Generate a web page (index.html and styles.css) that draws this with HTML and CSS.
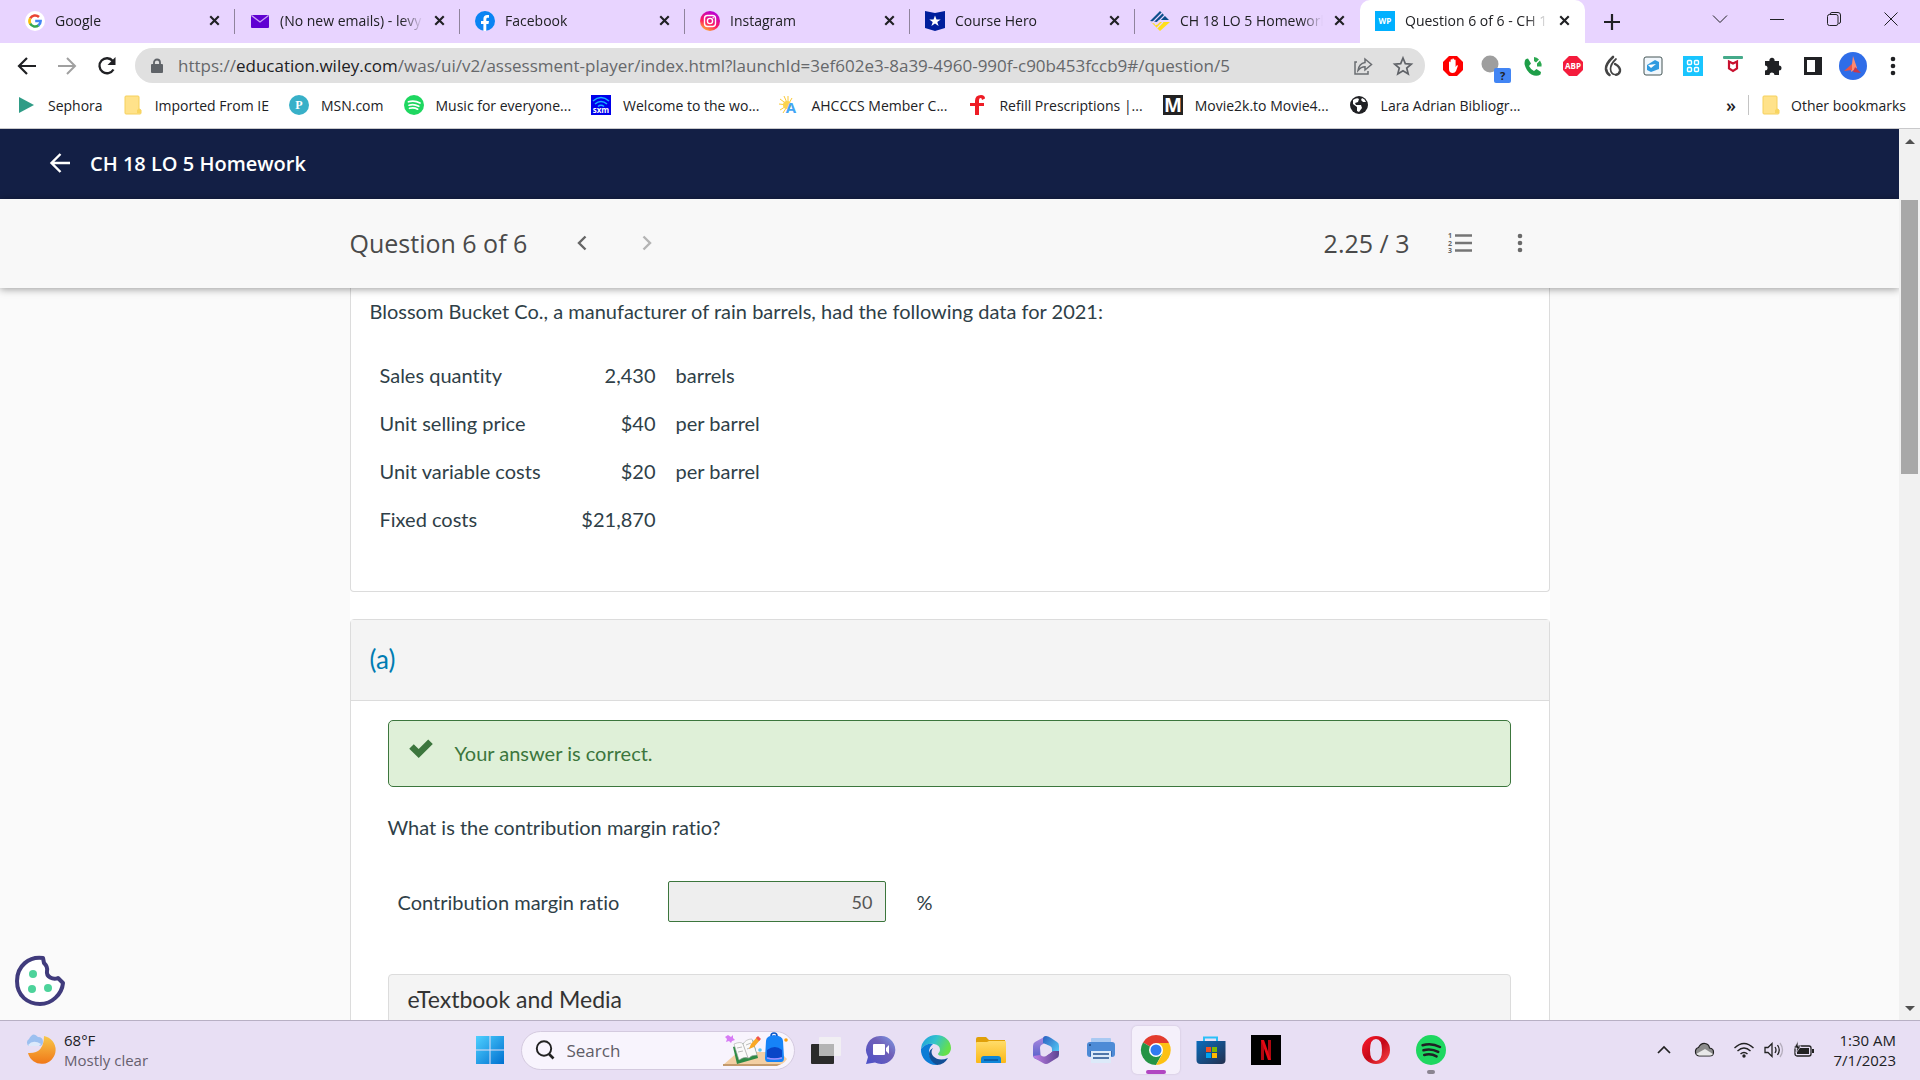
FILE: index.html
```
<!DOCTYPE html>
<html lang="en">
<head>
    <meta charset="utf-8">
    <meta name="viewport" content="width=device-width, initial-scale=1">
    <title>Question 6 of 6 - CH 18 LO 5 Homework</title>
    <link rel="stylesheet" href="styles.css">
</head>
<body>

    <!-- Shared icons -->
    <svg class="defs" aria-hidden="true">
        <defs>
            <linearGradient id="insta" x1="0.2" y1="1" x2="0.7" y2="0">
                <stop offset="0" stop-color="#ffc02e"/>
                <stop offset="0.4" stop-color="#ff1a5e"/>
                <stop offset="1" stop-color="#b400e0"/>
            </linearGradient>
            <linearGradient id="win" x1="0" y1="0" x2="1" y2="1">
                <stop offset="0" stop-color="#4fd0ff"/>
                <stop offset="1" stop-color="#0070d0"/>
            </linearGradient>
            <linearGradient id="moon" x1="0" y1="0" x2="0" y2="1">
                <stop offset="0" stop-color="#f8c84a"/>
                <stop offset="1" stop-color="#f07818"/>
            </linearGradient>
            <linearGradient id="chat" x1="0" y1="1" x2="1" y2="0">
                <stop offset="0" stop-color="#4a50c8"/>
                <stop offset="0.6" stop-color="#7060b8"/>
                <stop offset="1" stop-color="#7fa0e8"/>
            </linearGradient>
            <linearGradient id="edgeTop" x1="0" y1="0" x2="1" y2="0.4">
                <stop offset="0" stop-color="#1c9ae0"/>
                <stop offset="0.5" stop-color="#33c3cc"/>
                <stop offset="1" stop-color="#66e04a"/>
            </linearGradient>
            <linearGradient id="folder" x1="0" y1="0" x2="0" y2="1">
                <stop offset="0" stop-color="#ffdc6a"/>
                <stop offset="1" stop-color="#fbb816"/>
            </linearGradient>
            <linearGradient id="store" x1="0" y1="0" x2="1" y2="1">
                <stop offset="0" stop-color="#0a6cbc"/>
                <stop offset="1" stop-color="#24304e"/>
            </linearGradient>
            <linearGradient id="opera" x1="0" y1="0" x2="1" y2="1">
                <stop offset="0" stop-color="#ff1b2d"/>
                <stop offset="0.5" stop-color="#c40818"/>
                <stop offset="1" stop-color="#ff4a4a"/>
            </linearGradient>
            <linearGradient id="officeLeft" x1="0" y1="0" x2="0" y2="1">
                <stop offset="0" stop-color="#b08ae0"/>
                <stop offset="1" stop-color="#4a5cc8"/>
            </linearGradient>
            <linearGradient id="officeRight" x1="0" y1="0" x2="1" y2="1">
                <stop offset="0" stop-color="#2b5fc0"/>
                <stop offset="1" stop-color="#58d8fc"/>
            </linearGradient>
            <linearGradient id="officeBottom" x1="0" y1="0" x2="1" y2="0">
                <stop offset="0" stop-color="#c080e8"/>
                <stop offset="1" stop-color="#5c4490"/>
            </linearGradient>
        </defs>
        <symbol id="i-close" viewBox="0 0 16 16"><path d="M4 4l8 8M12 4l-8 8" stroke="#202124" stroke-width="2"/></symbol>
        <symbol id="i-folder" viewBox="0 0 20 20"><path d="M2 2q0-1 1-1h12q1 0 1 1v12l2 1v3q0 1-1 1H3q-1 0-1-1z" fill="#ffe28a" stroke="#f5d05c"/><path d="M14 18v-3l2-1.500 2 1.500v3z" fill="#f8d560"/></symbol>
        <symbol id="i-spotify" viewBox="0 0 20 20"><circle cx="10" cy="10" r="10" fill="#1ed760"/><path d="M4.400 6.800q6-1.800 11.600 1.200M5 10.200q5-1.500 9.800 1.100M5.500 13.300q4.400-1.200 8.200.9" fill="none" stroke="currentColor" stroke-width="1.700" stroke-linecap="round"/></symbol>
        <symbol id="i-dots" viewBox="0 0 20 20"><circle cx="10" cy="3" r="2.300"/><circle cx="10" cy="10" r="2.300"/><circle cx="10" cy="17" r="2.300"/></symbol>
    </svg>

    <!-- Tab strip -->
    <header class="tab-strip">
        <div class="tab">
            <svg class="favicon" viewBox="0 0 20 20"><circle cx="10" cy="10" r="10" fill="#fff"/><g fill="none" stroke-width="2.600"><path d="M5.200 7.400A5.600 5.600 0 0 1 14 6" stroke="#ea4335"/><path d="M5.300 12.900A5.600 5.600 0 0 1 5.200 7.300" stroke="#fbbc05"/><path d="M5.200 12.700A5.600 5.600 0 0 0 13.600 14.300" stroke="#34a853"/><path d="M10.200 10h5.400A5.600 5.600 0 0 1 13.400 14.400" stroke="#4285f4"/></g></svg>
            <span class="tab-title">Google</span>
            <button class="tab-close" aria-label="Close tab"><svg><use href="#i-close"/></svg></button>
        </div>
        <div class="tab">
            <svg class="favicon" viewBox="0 0 20 20"><rect x="1" y="4" width="18" height="13" rx="1" fill="#6001d2"/><path d="M1.500 4.500L10 11l8.500-6.500" fill="none" stroke="#c9a2f5" stroke-width="1.300"/></svg>
            <span class="tab-title">(No new emails) - levy</span>
            <button class="tab-close" aria-label="Close tab"><svg><use href="#i-close"/></svg></button>
        </div>
        <div class="tab">
            <svg class="favicon" viewBox="0 0 20 20"><circle cx="10" cy="10" r="10" fill="#0b84f3"/><path d="M8.400 20v-7H6v-3h2.400V8c0-2.600 1.500-4 3.800-4l1.800.1v2.600h-1.200c-1.200 0-1.500.7-1.500 1.500V10h2.700l-.5 3h-2.200v7z" fill="#fff"/></svg>
            <span class="tab-title">Facebook</span>
            <button class="tab-close" aria-label="Close tab"><svg><use href="#i-close"/></svg></button>
        </div>
        <div class="tab">
            <svg class="favicon" viewBox="0 0 20 20"><circle cx="10" cy="10" r="10" fill="url(#insta)"/><rect x="4.500" y="4.500" width="11" height="11" rx="3" fill="none" stroke="#fff" stroke-width="1.400"/><circle cx="10" cy="10" r="2.600" fill="none" stroke="#fff" stroke-width="1.400"/><circle cx="13.200" cy="6.800" r="0.800" fill="#fff"/></svg>
            <span class="tab-title">Instagram</span>
            <button class="tab-close" aria-label="Close tab"><svg><use href="#i-close"/></svg></button>
        </div>
        <div class="tab">
            <svg class="favicon" viewBox="0 0 20 20"><path d="M0 0l10 2L20 0v17l-10 3L0 17z" fill="#001e9c"/><path d="M10 4.500l1.500 4h4.200l-3.400 2.500 1.300 4-3.600-2.400L6.400 15l1.300-4-3.400-2.500h4.200z" fill="#fff"/></svg>
            <span class="tab-title">Course Hero</span>
            <button class="tab-close" aria-label="Close tab"><svg><use href="#i-close"/></svg></button>
        </div>
        <div class="tab no-line">
            <svg class="favicon" viewBox="0 0 20 20"><path d="M0 10L10 0l9 9H9l-2 2z" fill="#0d4f8b"/><path d="M1 11l9 9 10-9H10l-3 3z" fill="#ffdf1c"/><path d="M2 12L12 2M5 14L15 4M7 17l6-6" stroke="#e8d4ff" stroke-width="1.200"/></svg>
            <span class="tab-title">CH 18 LO 5 Homework</span>
            <button class="tab-close" aria-label="Close tab"><svg><use href="#i-close"/></svg></button>
        </div>
        <div class="tab active">
            <svg class="favicon" viewBox="0 0 20 20"><rect width="20" height="20" fill="#00b0ff"/><text x="10" y="13" class="wp">WP</text></svg>
            <span class="tab-title">Question 6 of 6 - CH 1</span>
            <button class="tab-close" aria-label="Close tab"><svg><use href="#i-close"/></svg></button>
        </div>
        <button class="new-tab" aria-label="New tab"><svg viewBox="0 0 16 16"><path d="M8 0v16M0 8h16" stroke="#202124" stroke-width="2.200"/></svg></button>
        <div class="window-buttons">
            <button aria-label="Search tabs"><svg viewBox="0 0 14 14"><path d="M0 3.500l7 7 7-7"/></svg></button>
            <button aria-label="Minimize"><svg viewBox="0 0 14 14"><path d="M0 7.500h14"/></svg></button>
            <button aria-label="Restore"><svg viewBox="0 0 14 14"><rect x="0.500" y="2.500" width="10.500" height="11" rx="2"/><path d="M3 2.500q0-2 2-2h6q2.500 0 2.500 2.500v7q0 1.500-2 1.500"/></svg></button>
            <button aria-label="Close"><svg viewBox="0 0 14 14"><path d="M0.500 0.500l13 13M13.500 0.500l-13 13"/></svg></button>
        </div>
    </header>

    <!-- Toolbar -->
    <div class="toolbar">
        <button class="tool" aria-label="Back"><svg viewBox="0 0 20 20"><path d="M19 10H3M10 2L2 10l8 8" fill="none" stroke="#202124" stroke-width="2.200"/></svg></button>
        <button class="tool" aria-label="Forward" disabled><svg viewBox="0 0 20 20"><path d="M1 10h16M10 2l8 8-8 8" fill="none" stroke="#a0a0a0" stroke-width="2"/></svg></button>
        <button class="tool" aria-label="Reload"><svg viewBox="0 0 20 20"><path d="M16.500 13.500A7.500 7.500 0 1 1 15.800 5" fill="none" stroke="#202124" stroke-width="2.300"/><path d="M18.500 1v8h-8z" fill="#202124"/></svg></button>
        <div class="address-bar">
            <svg class="lock" viewBox="0 0 12 16"><rect y="6" width="12" height="9" rx="1" fill="#5f6368"/><path d="M3 7V4.500a3 3 0 0 1 6 0V7" fill="none" stroke="#5f6368" stroke-width="1.800"/></svg>
            <a class="url" href="#">https://<b>education.wiley.com</b>/was/ui/v2/assessment-player/index.html?launchId=3ef602e3-8a39-4960-990f-c90b453fccb9#/question/5</a>
            <button class="tool" aria-label="Share"><svg viewBox="0 0 20 20" fill="none" stroke="#6a6d71" stroke-width="1.500"><path d="M4 6H2v12h13v-3"/><path d="M12 3l6.500 5.500L12 14v-3.200q-4 0-7 3.700 1-7 7-8z"/></svg></button>
            <button class="tool" aria-label="Bookmark"><svg viewBox="0 0 20 20"><path d="M10 2l2.300 5.600 6 .5-4.600 3.900 1.500 5.900-5.200-3.200-5.200 3.200L6.300 12 1.700 8.100l6-.5z" fill="none" stroke="#606368" stroke-width="1.700"/></svg></button>
        </div>
        <div class="extensions">
            <button class="tool" aria-label="AdBlock"><svg viewBox="0 0 20 20"><path d="M6 0h8l6 6v8l-6 6H6l-6-6V6z" fill="#f00"/><path d="M6 11V6.500q0-1 .8-1t.8 1V4.300q0-1 .8-1t.8 1V3.600q0-1 .9-1t.9 1v.8q0-1 .8-1t.8 1V11l1-1.600q.8-.6 1.400.2L13 15q-1 2-3.200 2Q6 17 6 13z" fill="#fff"/></svg></button>
            <button class="tool" aria-label="Site status"><svg viewBox="0 0 20 20"><circle cx="7" cy="8" r="8.500" fill="#9e9e9e"/></svg><span class="badge">?</span></button>
            <button class="tool" aria-label="Phone"><svg viewBox="0 0 20 20"><path d="M3 3l2-.5 3 5-2 2.500q2 4 5 5l2.500-2 4.500 3-.5 2.500q-4 2.500-9 0Q3 15 1.500 8q0-4 1.500-5z" fill="#1e9e48"/><path d="M11 1q3 0 5 2.500l-3 3L11 5zM17 4.500q2 3 1.500 6H14l0-3z" fill="#2aa850"/></svg></button>
            <button class="tool" aria-label="Adblock Plus"><svg viewBox="0 0 20 20"><path d="M6 0h8l6 6v8l-6 6H6l-6-6V6z" fill="#f41c3c"/><text x="10" y="13" class="abp">ABP</text></svg></button>
            <button class="tool" aria-label="Flame"><svg viewBox="0 0 20 20" fill="none" stroke="#444" stroke-linecap="round"><path d="M10 1Q2.500 8 3 13q.5 4 3.500 6" stroke-width="2.600"/><path d="M13 3Q7.500 8 7.500 13q.5 5 4 5.500" stroke-width="1.700"/><path d="M12 8q5.500 3 5 7-.8 3.500-4 3.800" stroke-width="2.400"/></svg></button>
            <button class="tool" aria-label="Print helper"><svg viewBox="0 0 20 20"><rect x="1" y="1" width="18" height="18" rx="2" fill="#f1f7fc" stroke="#455"/><path d="M4 9l8-5 4 2v7l-8 3-4-2z" fill="#2e9be0"/><path d="M5 9l8-1-5 4z" fill="#fff"/></svg></button>
            <button class="tool" aria-label="Apps"><svg viewBox="0 0 20 20"><rect width="20" height="20" fill="#19c5ff"/><g fill="none" stroke="#fff" stroke-width="1.400"><rect x="4.500" y="4.500" width="4" height="4" rx="1"/><rect x="11.500" y="4.500" width="4" height="4" rx="1"/><rect x="4.500" y="11.500" width="4" height="4" rx="1"/><rect x="11.500" y="11.500" width="4" height="4" rx="1"/></g></svg></button>
            <button class="tool" aria-label="McAfee"><svg viewBox="0 0 20 20"><rect y="0" width="20" height="3" rx="1" fill="#45aa8a"/><path d="M6 5.500v7l4 2.500 4-2.500v-7l-4 2z" fill="none" stroke="#c8102e" stroke-width="2.200"/></svg></button>
            <button class="tool" aria-label="Extensions"><svg viewBox="0 0 20 20"><path d="M2 5h4.500a2.600 2.600 0 1 1 5 0H16v4.500a2.500 2.500 0 1 1 0 5V19h-4.500a2.500 2.500 0 0 0-5 0H2v-4.500a2.500 2.500 0 0 0 0-5z" fill="#202124"/></svg></button>
            <button class="tool" aria-label="Side panel"><svg viewBox="0 0 20 20"><path d="M1 1h18v18H1zM4 4v12h8V4z" fill="#202124" fill-rule="evenodd"/></svg></button>
            <button class="tool avatar" aria-label="Profile"><svg viewBox="0 0 28 28"><circle cx="14" cy="14" r="14" fill="#2f6de8"/><path d="M14 4l4 12-6 4z" fill="#ff8a70"/><path d="M13 12l-8 7 8-1z" fill="#e8544a"/><path d="M16 15l6 6-8-1z" fill="#c8384a"/></svg></button>
            <button class="tool" aria-label="Menu"><svg fill="#202124"><use href="#i-dots"/></svg></button>
        </div>
    </div>

    <!-- Bookmarks -->
    <nav class="bookmarks">
        <a href="#"><svg viewBox="0 0 20 20"><path d="M3 2l15 8-15 8z" fill="#2f9c86"/></svg>Sephora</a>
        <a href="#"><svg><use href="#i-folder"/></svg>Imported From IE</a>
        <a href="#"><svg viewBox="0 0 20 20"><circle cx="10" cy="10" r="10" fill="#38b0c8"/><text x="10" y="14" class="pp">P</text></svg>MSN.com</a>
        <a href="#" class="on-white"><svg><use href="#i-spotify"/></svg>Music for everyone...</a>
        <a href="#"><svg viewBox="0 0 20 20"><rect width="20" height="20" fill="#0000eb"/><path d="M2 6q8-7 16 0M4 9q6-5 12 0M7 11.500q3-2.500 6 0" fill="none" stroke="#1ab0ff" stroke-width="1.600"/><text x="10" y="18" class="sxm">sxm</text></svg>Welcome to the wo...</a>
        <a href="#"><svg viewBox="0 0 20 20"><path d="M9 10L1 4M9 10L5 1M9 10l0-9M9 10L0 9M9 10l-8 5M9 10l-5 8M9 10l4-7" stroke="#fbc934"/><circle cx="8" cy="10" r="4" fill="#fbd34d"/><text x="12" y="18" class="ahc">A</text></svg>AHCCCS Member C...</a>
        <a href="#"><svg viewBox="0 0 20 20"><path d="M8 20v-9H3V8h5V6q0-6 6-6 4 0 4 3.500L15 5q0-2-1.500-2T12 6v2h5v3h-5v9z" fill="#ee1c25"/></svg>Refill Prescriptions |...</a>
        <a href="#"><svg viewBox="0 0 20 20"><rect width="20" height="20" fill="#222"/><text x="10" y="17" class="mov">M</text></svg>Movie2k.to Movie4...</a>
        <a href="#"><svg viewBox="0 0 20 20"><circle cx="10" cy="10" r="9" fill="#202124"/><path d="M4 5q4-3 6-1l-1 3-3 1 1 2 5 0 1 3-3 4-2-1 0-4-4-3zM13 3q3 1 4 4l-3 0-2-2z" fill="#fff"/></svg>Lara Adrian Bibliogr...</a>
        <button class="overflow" aria-label="More bookmarks">»</button>
        <a href="#" class="other"><svg><use href="#i-folder"/></svg>Other bookmarks</a>
    </nav>

    <!-- Page -->
    <div class="viewport">
        <div class="page">
            <div class="course-bar">
                <a href="#" aria-label="Back to course"><svg viewBox="0 0 20 20"><path d="M20 10H2M10.500 1L1.500 10l9 9" fill="none" stroke="#fff" stroke-width="2.400"/></svg></a>
                <h1>CH 18 LO 5 Homework</h1>
            </div>

            <div class="question-bar">
                <div class="question-inner">
                    <h2>Question 6 of 6</h2>
                    <button class="step" aria-label="Previous question"><svg viewBox="0 0 10 16"><path d="M8.500 1.500L2 8l6.500 6.500"/></svg></button>
                    <button class="step" aria-label="Next question" disabled><svg viewBox="0 0 10 16"><path d="M1.500 1.500L8 8l-6.500 6.500"/></svg></button>
                    <span class="score">2.25 / 3</span>
                    <button class="list-button" aria-label="Question list"><svg viewBox="0 0 24 20"><path d="M7 2.500h17M7 10h17M7 17.500h17" stroke="#757575" stroke-width="2.500"/><text x="0" y="5">1</text><text x="0" y="13">2</text><text x="0" y="20">3</text></svg></button>
                    <button class="more-button" aria-label="More options"><svg fill="#6a6a6a"><use href="#i-dots"/></svg></button>
                </div>
            </div>

            <main class="content">
                <section class="card card-intro">
                    <p>Blossom Bucket Co., a manufacturer of rain barrels, had the following data for 2021:</p>
                    <table class="data">
                        <tr><td>Sales quantity</td><td class="num">2,430</td><td>barrels</td></tr>
                        <tr><td>Unit selling price</td><td class="num">$40</td><td>per barrel</td></tr>
                        <tr><td>Unit variable costs</td><td class="num">$20</td><td>per barrel</td></tr>
                        <tr><td>Fixed costs</td><td class="num">$21,870</td><td></td></tr>
                    </table>
                </section>

                <section class="card">
                    <h3 class="part-title">(a)</h3>
                    <div class="part-body">
                        <div class="alert">
                            <svg viewBox="0 0 24 18"><path d="M2.500 7.500l7.200 7L21.500 2.800" fill="none" stroke="#3c763d" stroke-width="6.500"/></svg>
                            <span>Your answer is correct.</span>
                        </div>
                        <p>What is the contribution margin ratio?</p>
                        <div class="answer">
                            <label for="ratio">Contribution margin ratio</label>
                            <input type="text" id="ratio" value="50" disabled>
                            <span>%</span>
                        </div>
                        <div class="media">eTextbook and Media</div>
                    </div>
                </section>
            </main>

            <button class="cookie" aria-label="Cookie settings"><svg viewBox="0 0 50 50"><path d="M28 2C14 0 2 10 2 25s11 23 23 23 22-10 23-21l-5-5c-5 2-12-1-11-7 1-4-1-6-3-8z" fill="#fff" stroke="#403b7c" stroke-width="4" stroke-linejoin="round"/><g fill="#4dd39b"><circle cx="18" cy="18" r="4"/><circle cx="17" cy="33" r="4"/><circle cx="33" cy="32" r="4"/></g></svg></button>
        </div>
        <div class="scrollbar">
            <svg viewBox="0 0 10 6"><path d="M0 6l5-5 5 5z"/></svg>
            <div class="thumb"></div>
            <svg class="down" viewBox="0 0 10 6"><path d="M0 0l5 5 5-5z"/></svg>
        </div>
    </div>

    <!-- Taskbar -->
    <footer class="taskbar">
        <div class="weather">
            <svg viewBox="0 0 28 28"><path d="M19 2A14 14 0 1 1 3 19Q19 20 19 2z" fill="url(#moon)"/><path d="M4 12a4 4 0 0 1 0-7q4-8 9-2 5 0 5 5 0 4-4 4z" fill="#9cc0f0"/><path d="M3 11q5-6 13-1l-2 2H4z" fill="#dce9fb"/></svg>
            <div>
                <div class="temp">68°F</div>
                <div class="sky">Mostly clear</div>
            </div>
        </div>

        <div class="dock">
            <button aria-label="Start"><svg viewBox="0 0 30 30"><path d="M1 1h13.500v13.500H1zM15.500 1H29v13.500H15.500zM1 15.500h13.500V29H1zM15.500 15.500H29V29H15.500z" fill="url(#win)"/></svg></button>
            <div class="search">
                <svg class="glass" viewBox="0 0 20 20"><circle cx="9" cy="8.500" r="7.200" fill="none" stroke="#222" stroke-width="1.900"/><path d="M14 14l4.500 4.500" stroke="#222" stroke-width="2.600"/></svg>
                <input type="text" placeholder="Search" aria-label="Search">
                <svg class="school" viewBox="0 0 66 36"><path d="M0 33l15-13h42l7 7q-4 6-10 6z" fill="#f3cfa4"/><path d="M0 32h58l-4 2H0z" fill="#c49a6c"/><path d="M10 15l20-7 5 18-21 6z" fill="#2e8b45"/><path d="M11 12q7-3 9 0 3-5 9-5l5 16q-6 0-8 3-5-2-10 2z" fill="#fafafa" stroke="#aaa" stroke-width="0.600"/><path d="M20 12l5 14M14 16l5-1M15 20l5-1M23 13l5-2M24 17l5-2" stroke="#aaa" stroke-width="0.800"/><path d="M26 17l2-5 6-7 3 3-6 7z" fill="#f9a825"/><path d="M33 6l2-2 3 3-2 2z" fill="#ef5350"/><path d="M43 9q0-5 8-6 9 1 9 6l1 17q0 4-3 4H45q-3 0-3-4z" fill="#1683f8"/><path d="M48 4q0-3 3-3t3 3" fill="none" stroke="#0a56c8" stroke-width="1.500"/><path d="M44 18q8-6 15 0v7q-7 3-15 0z" fill="#0846c8"/><path d="M44 26q7 2 15 0" stroke="#a090ff" stroke-width="1.500" fill="none"/><path d="M5 3l3 2 2-2v3l2 2-3 1-1 2-2-2-3 1 1-3-2-2z" fill="#d77cf5"/><circle cx="37" cy="18" r="1.800" fill="#5cc8f0"/><circle cx="63" cy="8" r="1.800" fill="#f9a010"/></svg>
            </div>
            <button aria-label="Task view"><svg viewBox="0 0 30 30"><rect x="0" y="9" width="23" height="20" rx="1" fill="#2b2b2b"/><rect x="8" y="2" width="22" height="19" rx="1" fill="#f2f2f2" fill-opacity="0.850"/><rect x="8" y="9" width="15" height="12" fill="#b4b4b4"/></svg></button>
            <button aria-label="Chat"><svg viewBox="0 0 30 30"><path d="M15 1a14 14 0 1 1-6 26.500L0 29l2-7A14 14 0 0 1 15 1z" fill="url(#chat)"/><rect x="7" y="9" width="12" height="11" rx="1" fill="#fff"/><path d="M20 13l3-3v9l-3-3z" fill="#fff"/></svg></button>
            <button aria-label="Edge"><svg viewBox="0 0 30 30"><path d="M0 14A15 15 0 0 1 15 0c9 0 15 6 15 13 0 5-4 8-8 8-3 0-5-1-5-2s2-2 2-4q0-5-6-6Q5 8 0 14z" fill="url(#edgeTop)"/><path d="M0 14q5-6 12-5-4 3-4 8 0 8 9 12l-2 1A15 15 0 0 1 0 14z" fill="#0c7cd6"/><path d="M12 13q-3 4 0 8 6 6 15 2-4 7-11 7-8-4-8-11 0-4 4-6z" fill="#114f96"/></svg></button>
            <button aria-label="File Explorer"><svg viewBox="0 0 30 30"><path d="M0 4q0-2 2-2h8l3 3h16v4H0z" fill="#e0a008"/><path d="M0 8q0-1 1-1h10l2-1h16q1 0 1 1v20q0 1-1 1H1q-1 0-1-1z" fill="url(#folder)"/><path d="M5 28v-4q0-3 3-3h14q3 0 3 3v4z" fill="#0f86d8"/><path d="M8 25h14" stroke="#0a4c90" stroke-width="1.300"/></svg></button>
            <button aria-label="Microsoft 365"><svg viewBox="0 0 30 30"><path d="M15 1L4 7q-2 1-2 4v9q0 3 3 4l5 2-1-13q0-3 3-4l5-3z" fill="url(#officeLeft)"/><path d="M15 1q2 0 5 2l6 4q2 1 2 4v10l-7-4v-3q0-2-2-3l-7-3V4q0-3 3-3z" fill="url(#officeRight)"/><path d="M2 21q1 2 3 3l7 4q3 2 6 0l8-5q2-1 2-4v-3l-6 0-7 5q-2 1-4 0l-2-1z" fill="url(#officeBottom)"/><path d="M15 9.500l5 3v5l-5 3-5-3v-5z" fill="#e8dff4"/></svg></button>
            <button aria-label="Printer"><svg viewBox="0 0 30 30"><rect x="5" y="3" width="20" height="8" rx="1" fill="#a9c9f2"/><rect x="1" y="7" width="28" height="15" rx="3" fill="#4d8bd6"/><path d="M4 16h22v5H4z" fill="#3467b0"/><rect x="5" y="16" width="20" height="12" fill="#dceaf9"/><path d="M7 19h16M7 23h16" stroke="#20508e" stroke-width="1.500"/><circle cx="4" cy="10" r="1" fill="#1d4780"/></svg></button>
            <button class="running" aria-label="Chrome"><svg viewBox="0 0 30 30"><path d="M15 15L2 7.500A15 15 0 0 1 28 7.500z" fill="#e33b2e"/><path d="M15 15L2 7.500A15 15 0 0 0 15 30l6-11z" fill="#249445"/><path d="M15 8h13A15 15 0 0 1 15 30l6.500-11z" fill="#fdc113"/><circle cx="15" cy="15" r="7" fill="#fff"/><circle cx="15" cy="15" r="5.500" fill="#2f7bf0"/></svg></button>
            <button aria-label="Microsoft Store"><svg viewBox="0 0 30 30"><path d="M8 7V2.500h13V7" fill="none" stroke="#2cc0f8" stroke-width="2"/><path d="M0.500 6h29v19q0 4-4 4h-21q-4 0-4-4z" fill="url(#store)"/><path d="M10 12h5v5h-5z" fill="#f25022"/><path d="M16 12h5v5h-5z" fill="#7fba00"/><path d="M10 18h5v5h-5z" fill="#00a4ef"/><path d="M16 18h5v5h-5z" fill="#ffb900"/></svg></button>
            <button aria-label="Netflix"><svg viewBox="0 0 30 30"><rect width="30" height="30" fill="#000"/><path d="M10 5h3v20h-3zM17 5h3v20h-3z" fill="#b00710"/><path d="M10 5h3l7 20h-3z" fill="#e50914"/></svg></button>
            <span class="slot"></span>
            <button aria-label="Opera"><svg viewBox="0 0 30 30"><path d="M15 1a14 14 0 1 0 0 28 14 14 0 1 0 0-28zm0 3q6 0 6 11t-6 11-6-11 6-11z" fill="url(#opera)" fill-rule="evenodd"/></svg></button>
            <button class="background-app" aria-label="Spotify"><svg><use href="#i-spotify"/></svg></button>
        </div>

        <div class="tray">
            <svg class="up" viewBox="0 0 20 20"><path d="M4 13l6-6 6 6" fill="none" stroke="#222" stroke-width="1.700"/></svg>
            <svg class="cloud" viewBox="0 0 20 20"><path d="M5 16a4.400 4.400 0 0 1-.5-8.500Q7 3 11 3.500q4 .5 4.500 4.500 4 .5 4 4 0 4-4 4z" fill="#8c8c8c" stroke="#222" stroke-width="1.200"/><path d="M2 14l9-5 8 5q-1 1.500-3 1.500H5z" fill="#e8e8e8"/></svg>
            <svg viewBox="0 0 20 20" fill="none" stroke="#222" stroke-width="1.400"><path d="M0.500 8q9.500-9 19 0M3.500 11q6.500-6 13 0M6.500 14q3.500-3.200 7 0"/><circle cx="10" cy="16" r="1" fill="#222"/></svg>
            <svg viewBox="0 0 20 20" fill="none" stroke="#222" stroke-width="1.300"><path d="M1 7.500h3l4-4v13l-4-4H1z"/><path d="M11 7q2 3 0 6M13.500 5q3.500 5 0 10"/><path d="M16 3q5 7 0 14" stroke="#b5aebd"/></svg>
            <svg class="battery" viewBox="0 0 20 20"><rect x="1" y="6" width="16" height="10" rx="2" fill="none" stroke="#222" stroke-width="1.300"/><rect x="3" y="8" width="12" height="6" fill="#222"/><path d="M18 9h2v4h-2z" fill="#222"/><path d="M4 1L0 8h3l-1 5 5-7H4z" fill="#222" stroke="#e8dff4" stroke-width="0.700"/></svg>
            <div class="clock">
                <div>1:30 AM</div>
                <div>7/1/2023</div>
            </div>
        </div>
    </footer>

</body>
</html>
```
FILE: styles.css
```
* {
    margin: 0;
    padding: 0;
    box-sizing: border-box;
}

body {
    display: flex;
    flex-direction: column;
    height: 100vh;
    overflow: hidden;
    font-family: 'Open Sans', 'Noto Sans', sans-serif;
    font-size: 14px;
    color: #202124;
    background: #fff;
}

a {
    color: inherit;
    text-decoration: none;
}

button {
    display: flex;
    align-items: center;
    justify-content: center;
    border: none;
    background: none;
    font: inherit;
    color: inherit;
    cursor: pointer;
}

svg {
    flex: none;
    width: 20px;
    height: 20px;
    overflow: visible;
}

.defs {
    position: absolute;
    width: 0;
    height: 0;
}

/* Tab strip */
.tab-strip {
    display: flex;
    align-items: stretch;
    flex: none;
    height: 43px;
    padding-left: 10px;
    background: #e8d4ff;
}

.tab {
    position: relative;
    display: flex;
    align-items: center;
    flex: 0 1 225px;
    min-width: 0;
    padding: 0 12px 2px 15px;
}

.tab::after {
    content: '';
    position: absolute;
    right: 0;
    top: 9px;
    width: 1px;
    height: 25px;
    background: #8f839c;
}

.tab.active {
    background: #fff;
    border-radius: 10px 10px 0 0;
}

.tab.active::after,
.tab.no-line::after {
    display: none;
}

.tab-title {
    flex: 1;
    min-width: 0;
    margin-left: 10px;
    overflow: hidden;
    white-space: nowrap;
    -webkit-mask-image: linear-gradient(to right, #000 85%, transparent);
    mask-image: linear-gradient(to right, #000 85%, transparent);
}

.tab-close {
    margin-left: 8px;
}

.tab-close svg {
    width: 17px;
    height: 17px;
}

.wp, .abp, .pp, .sxm, .ahc, .mov {
    fill: #fff;
    font-weight: 700;
    text-anchor: middle;
}

.wp,
.abp,
.sxm {
    font-size: 8px;
}

.pp {
    font-family: 'Liberation Serif', serif;
    font-size: 12px;
}

.ahc {
    fill: #42a5f5;
    font-size: 15px;
}

.mov {
    font-size: 19px;
}

.new-tab {
    width: 54px;
}

.new-tab svg {
    width: 16px;
    height: 16px;
}

.window-buttons {
    display: flex;
    margin-left: auto;
    padding: 0 1px 6px 0;
}

.window-buttons button {
    width: 57px;
}

.window-buttons svg {
    width: 14px;
    height: 14px;
    fill: none;
    stroke: #202124;
}

/* Toolbar */
.toolbar {
    display: flex;
    align-items: center;
    flex: none;
    height: 45px;
    padding: 0 7px;
}

.tool {
    position: relative;
    flex: none;
    width: 40px;
    height: 35px;
}

.address-bar {
    display: flex;
    align-items: center;
    flex: 1;
    min-width: 0;
    height: 35px;
    margin: 0 8px;
    padding: 0 2px 0 16px;
    border-radius: 18px;
    background: #e0e0e0;
}

.lock {
    width: 12px;
    height: 16px;
}

.url {
    flex: 1;
    min-width: 0;
    margin-left: 15px;
    overflow: hidden;
    white-space: nowrap;
    font-size: 17px;
    color: #66686b;
}

.url b {
    font-weight: 400;
    color: #202124;
}

.extensions {
    display: flex;
    align-items: center;
}

.badge {
    position: absolute;
    right: 2px;
    bottom: 0;
    width: 17px;
    height: 15px;
    border-radius: 2px;
    background: #4285f4;
    font-size: 11px;
    font-weight: 700;
    line-height: 15px;
}

.avatar svg {
    width: 28px;
    height: 28px;
}

/* Bookmarks */
.bookmarks {
    display: flex;
    align-items: center;
    gap: 20px;
    flex: none;
    height: 41px;
    padding: 0 14px 6px 16px;
    border-bottom: 1px solid #c9c9cb;
    white-space: nowrap;
}

.bookmarks a {
    display: flex;
    align-items: center;
    gap: 12px;
}

.on-white svg {
    color: #fff;
}

.overflow {
    margin-left: auto;
    font-size: 18px;
    font-weight: 600;
}

.bookmarks .other {
    gap: 10px;
    margin-left: -8px;
    padding-left: 12px;
    border-left: 1px solid #c4c4c4;
}

/* Page */
.viewport {
    display: flex;
    flex: 1;
    min-height: 0;
}

.page {
    position: relative;
    display: flex;
    flex-direction: column;
    flex: 1;
    min-width: 0;
    overflow: hidden;
    background: #fafafa;
}

.course-bar {
    display: flex;
    align-items: center;
    gap: 20px;
    flex: none;
    height: 70px;
    padding: 0 50px 2px;
    background: #131f45;
    color: #fff;
}

.course-bar a {
    display: flex;
}

.course-bar h1 {
    font-size: 20px;
    font-weight: 600;
}

.question-bar {
    position: relative;
    z-index: 1;
    flex: none;
    background: #f8f8f8;
    box-shadow: 0 1px 8px rgba(0, 0, 0, 0.4);
}

.question-inner {
    display: flex;
    align-items: center;
    max-width: 1200px;
    height: 89px;
    margin: 0 auto;
    padding-bottom: 2px;
    color: #4a4a4a;
}

.question-inner h2,
.score {
    font-size: 25px;
    font-weight: 400;
}

.question-inner h2 {
    margin-right: 22px;
}

.step {
    width: 65px;
    height: 40px;
}

.step svg {
    width: 10px;
    height: 16px;
    fill: none;
    stroke: #666;
    stroke-width: 2.4;
}

.step:disabled svg {
    stroke: #b4b4b4;
}

.score {
    margin-left: auto;
}

.list-button {
    margin-left: 38px;
}

.list-button svg {
    width: 24px;
    height: 20px;
}

.list-button text {
    fill: #666;
    font-size: 7px;
    font-weight: 700;
}

.more-button {
    width: 60px;
    margin-left: 18px;
}

/* Question content */
.content {
    width: 100%;
    max-width: 1200px;
    margin: 0 auto;
    background: #fff;
    font-family: Lato, sans-serif;
    font-size: 20px;
    font-variant-ligatures: none;
    line-height: 28px;
    color: #2f3f48;
}

.card {
    border: 1px solid #dcdcdc;
    border-radius: 4px;
}

.card-intro {
    margin-bottom: 27px;
    padding: 9px 19px 48px;
    border-top: none;
    border-radius: 0 0 4px 4px;
}

.data {
    margin-top: 26px;
    border-collapse: collapse;
}

.data td {
    height: 48px;
    padding: 10px;
}

.data td:first-child {
    width: 183px;
}

.data .num {
    width: 113px;
    text-align: right;
}

.part-title {
    padding: 25px 19px 27px;
    border-bottom: 1px solid #dcdcdc;
    background: #f4f4f4;
    font-size: 26px;
    font-weight: 400;
    color: #007cb2;
}

.part-body {
    padding: 19px 38px 0 37px;
}

.alert {
    display: flex;
    align-items: flex-start;
    gap: 22px;
    margin-bottom: 26px;
    padding: 18px 20px 19px;
    border: 1px solid #3c763d;
    border-radius: 5px;
    background: #dff0d8;
    color: #3c763d;
}

.alert svg {
    width: 24px;
    height: 18px;
}

.answer {
    display: flex;
    align-items: center;
    margin: 40px 0 52px;
    padding-left: 10px;
}

.answer label {
    width: 270px;
}

.answer input {
    width: 218px;
    height: 41px;
    margin-right: 31px;
    padding: 0 12px;
    border: 1px solid #3c763d;
    border-radius: 2px;
    background: #eee;
    font-family: Lato, sans-serif;
    font-size: 18px;
    color: #555;
    text-align: right;
}

.media {
    padding: 10px 19px 19px;
    border: 1px solid #dcdcdc;
    border-radius: 4px;
    background: #f4f4f4;
    font-size: 23px;
    color: #333;
}

.cookie {
    position: absolute;
    left: 15px;
    bottom: 14px;
}

.cookie svg {
    width: 50px;
    height: 50px;
}

/* Scrollbar */
.scrollbar {
    display: flex;
    flex-direction: column;
    align-items: center;
    flex: none;
    width: 21px;
    padding: 9px 0 8px;
    background: #f1f1f1;
}

.scrollbar svg {
    width: 10px;
    height: 6px;
    fill: #505050;
}

.scrollbar .down {
    margin-top: auto;
}

.thumb {
    width: 17px;
    height: 274px;
    margin-top: 56px;
    background: #a8a8a8;
}

/* Taskbar */
.taskbar {
    display: grid;
    grid-template-columns: 1fr auto 1fr;
    align-items: center;
    flex: none;
    height: 60px;
    padding-bottom: 1px;
    border-top: 1px solid #b8b0c4;
    background: #e8dff4;
}

.weather {
    display: flex;
    gap: 11px;
    padding-left: 25px;
    font-size: 15px;
    line-height: 20px;
}

.weather svg {
    width: 28px;
    height: 28px;
    margin-top: 4px;
}

.sky {
    color: #66606e;
}

.dock {
    display: flex;
    align-items: center;
    gap: 7px;
}

.dock button,
.slot {
    position: relative;
    width: 48px;
    height: 48px;
    border-radius: 5px;
}

.dock button svg {
    width: 30px;
    height: 30px;
}

.dock .running {
    background: #f5f0fb;
    box-shadow: 0 0 2px #c4bacf;
}

.running::after,
.background-app::after {
    content: '';
    position: absolute;
    left: 50%;
    bottom: 0;
    width: 20px;
    height: 4px;
    margin-left: -10px;
    border-radius: 2px;
    background: #b146c2;
}

.background-app::after {
    width: 8px;
    margin-left: -4px;
    background: #8a8490;
}

.search {
    display: flex;
    align-items: center;
    width: 274px;
    height: 39px;
    padding: 0 5px 0 13px;
    border: 1px solid #d4cadf;
    border-radius: 20px;
    background: #f8f4fd;
}

.search input {
    flex: 1;
    min-width: 0;
    margin-left: 12px;
    border: none;
    background: none;
    font: inherit;
    font-size: 17px;
}

.search input::placeholder {
    color: #605c66;
}

.search .school {
    width: 66px;
    height: 36px;
}

.tray {
    display: flex;
    align-items: center;
    gap: 10px;
    justify-content: flex-end;
    padding-right: 24px;
}

.tray .up,
.tray .cloud {
    margin-right: 10px;
}

.clock {
    margin-left: 10px;
    font-size: 15px;
    line-height: 20px;
    text-align: right;
}
```
